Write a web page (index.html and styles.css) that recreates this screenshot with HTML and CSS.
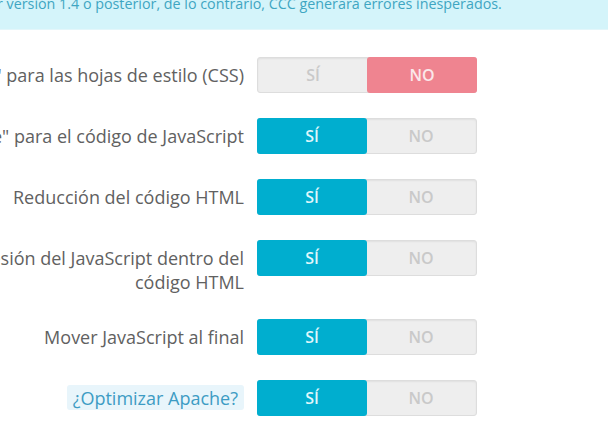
FILE: index.html
```html
<!DOCTYPE html>
<html lang="es">

<head>
    <meta charset="UTF-8">
    <meta name="viewport" content="width=device-width, initial-scale=1.0">
    <title>CCC - Combinar, comprimir y almacenar en caché</title>
    <link rel="stylesheet" href="styles.css">
</head>

<body>

    <div class="alert">
        <p>r versión 1.4 o posterior, de lo contrario, CCC generará errores inesperados.</p>
    </div>

    <form class="options" action="#">
        <div class="form-group">
            <label class="control-label">Optimización "Smart cache" para las hojas de estilo (CSS)</label>
            <span class="switch">
                <span class="opt">Sí</span>
                <span class="opt on no">NO</span>
            </span>
        </div>
        <div class="form-group">
            <label class="control-label">Optimización "Smart cache" para el código de JavaScript</label>
            <span class="switch">
                <span class="opt on yes">Sí</span>
                <span class="opt">NO</span>
            </span>
        </div>
        <div class="form-group">
            <label class="control-label">Reducción del código HTML</label>
            <span class="switch">
                <span class="opt on yes">Sí</span>
                <span class="opt">NO</span>
            </span>
        </div>
        <div class="form-group">
            <label class="control-label">Compresión del JavaScript dentro del<br>código HTML</label>
            <span class="switch">
                <span class="opt on yes">Sí</span>
                <span class="opt">NO</span>
            </span>
        </div>
        <div class="form-group">
            <label class="control-label">Mover JavaScript al final</label>
            <span class="switch">
                <span class="opt on yes">Sí</span>
                <span class="opt">NO</span>
            </span>
        </div>
        <div class="form-group">
            <label class="control-label"><span class="label-tooltip">¿Optimizar Apache?</span></label>
            <span class="switch">
                <span class="opt on yes">Sí</span>
                <span class="opt">NO</span>
            </span>
        </div>
    </form>

</body>

</html>
```

FILE: styles.css
```css
html,
body {
    margin: 0;
    padding: 0;
    background: #fff;
    overflow: hidden;
}

body {
    font-family: "Open Sans", "Liberation Sans", sans-serif;
    color: #616161;
}

.alert {
    background: #d4f4fa;
    color: #3fa6c2;
    border-bottom: 1px solid #e3f6fa;
    height: 29px;
    overflow: hidden;
}

.alert p {
    margin: -5px 0 0 -3px;
    font-size: 14.3px;
    line-height: 18px;
    white-space: nowrap;
}

.options {
    margin: 27px 0 0 -400px;
}

.form-group {
    display: flex;
    align-items: flex-start;
    gap: 13px;
    margin-bottom: 25px;
}

.control-label {
    width: 644px;
    flex: none;
    text-align: right;
    white-space: nowrap;
    font-size: 18px;
    line-height: 24px;
    padding-top: 6px;
}

.label-tooltip {
    background: #e8f5fb;
    color: #3d9cc4;
    padding: 1px 6px 0;
    border-radius: 3px;
}

.switch {
    display: flex;
    width: 220px;
    height: 36px;
    box-sizing: border-box;
    background: #eee;
    border: 1px solid #ddd;
    border-radius: 3px;
    box-shadow: inset 0 1px 2px rgba(0, 0, 0, 0.06);
    flex: none;
}

.opt {
    flex: 1;
    display: flex;
    align-items: center;
    justify-content: center;
    font-size: 16px;
    font-weight: 600;
    text-transform: uppercase;
    color: #c9c9c9;
}

.opt.on {
    margin: -1px;
    border-radius: 3px;
}

.opt.yes {
    background: #00aecf;
    color: #dff6fb;
}

.opt.no {
    background: #ef8490;
    color: #fbe7ea;
}
```
